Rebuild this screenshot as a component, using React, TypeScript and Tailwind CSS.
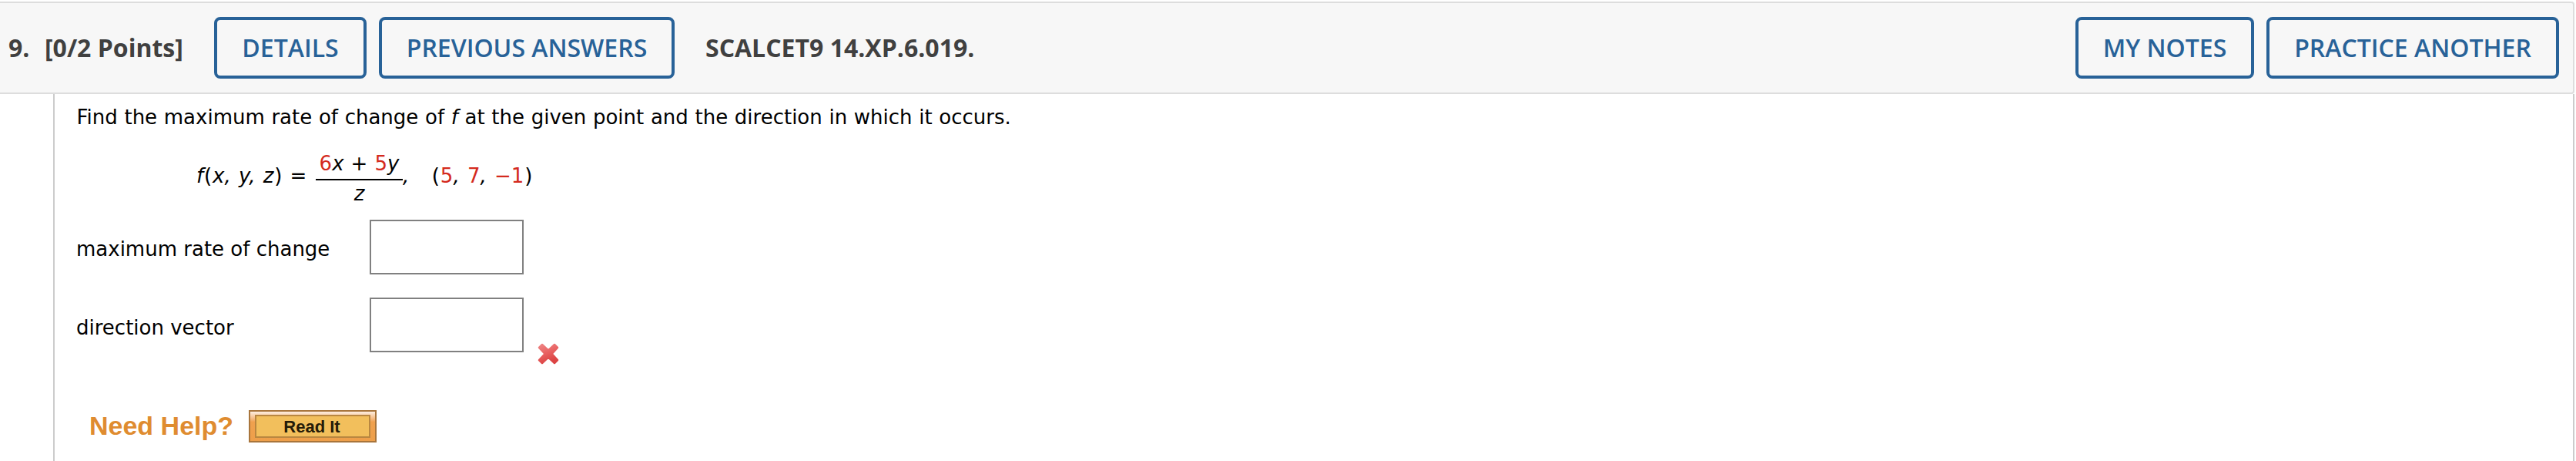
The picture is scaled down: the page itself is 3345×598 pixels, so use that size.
import type { ReactNode } from "react";

function HeaderButton({ children, width }: { children: ReactNode; width: string }) {
  return (
    <button
      className={`${width} flex h-[80px] shrink-0 items-center justify-center rounded-[8px] border-4 border-[#286298] font-semibold whitespace-nowrap text-[#286298]`}
    >
      {children}
    </button>
  );
}

function Header() {
  return (
    <header className="flex h-[120px] w-[3343px] items-center rounded-r-[4px] border-y-2 border-r-2 border-[#dddddd] bg-[#f7f7f7] font-['Open_Sans',sans-serif] text-[32px] leading-[44px] text-[#404040]">
      <div className="flex w-[278px] shrink-0 pl-[11px] font-bold whitespace-nowrap">
        <span className="w-[47px]">9.</span>
        <span>[0/2 Points]</span>
      </div>
      <HeaderButton width="w-[198px]">DETAILS</HeaderButton>
      <div className="w-4 shrink-0" />
      <HeaderButton width="w-[384px]">PREVIOUS ANSWERS</HeaderButton>
      <span className="ml-[40px] font-bold whitespace-nowrap">SCALCET9 14.XP.6.019.</span>
      <div className="mr-[18px] ml-auto flex gap-4">
        <HeaderButton width="w-[232px]">MY NOTES</HeaderButton>
        <HeaderButton width="w-[380px]">PRACTICE ANOTHER</HeaderButton>
      </div>
    </header>
  );
}

function Red({ children }: { children: ReactNode }) {
  return <span className="text-[#d42a1e]">{children}</span>;
}

function Paren({ children }: { children: ReactNode }) {
  return <span className="px-[0.85px]">{children}</span>;
}

function Comma() {
  return (
    <>
      <i className="pr-[1.2px]">,</i>{" "}
    </>
  );
}

function Equation() {
  return (
    <div className="mt-[22px] ml-[155px] flex h-[78px] whitespace-nowrap [word-spacing:0.8px]">
      <div className="w-[155px] pt-[22px]">
        <i>f</i>
        <Paren>(</Paren>
        <i>x</i>
        <Comma />
        <i>y</i>
        <Comma />
        <i>z</i>
        <Paren>)</Paren> =
      </div>
      <div className="flex w-[113px] flex-col items-center">
        <div className="h-[44px] w-full border-b-2 border-black pt-[6px] text-center">
          <Red>6</Red>
          <i>x</i> + <Red>5</Red>
          <i>y</i>
        </div>
        <div className="pt-px">
          <i>z</i>
        </div>
      </div>
      <div className="w-[37px] pt-[22px]">
        <i>,</i>
      </div>
      <div className="pt-[22px]">
        <Paren>(</Paren>
        <Red>5</Red>
        <Comma />
        <Red>7</Red>
        <Comma />
        <Red>−1</Red>
        <Paren>)</Paren>
      </div>
    </div>
  );
}

function WrongMark() {
  return (
    <svg className="mt-[59px] ml-[18px] h-[28px] w-[28px]" viewBox="0 0 28 28">
      <defs>
        <linearGradient id="mark" x1="0" y1="0" x2="0.4" y2="1">
          <stop offset="0" stopColor="#ee8585" />
          <stop offset="0.5" stopColor="#e96363" />
          <stop offset="1" stopColor="#dc4444" />
        </linearGradient>
      </defs>
      <path
        d="M6 2 L14 9.5 L22 2 L26 6 L18.700 14 L26 22 L22 26 L14 18.700 L6 26 L2 22 L9.500 14 L2 6 Z"
        fill="url(#mark)"
        stroke="url(#mark)"
        strokeWidth="2.500"
        strokeLinejoin="round"
      />
    </svg>
  );
}

function Answer({ label, wrong }: { label: string; wrong?: boolean }) {
  return (
    <div className="flex h-[101px] items-start">
      <label className={`${wrong ? "pt-[23px]" : "pt-[22px]"} w-[381px] whitespace-nowrap`}>{label}</label>
      <input className="h-[71px] w-[200px] border-2 border-[#808080] bg-white" aria-label={label} />
      {wrong && <WrongMark />}
    </div>
  );
}

function NeedHelp() {
  return (
    <div className="mt-[45px] ml-[17px] flex items-start font-['Liberation_Sans',Arial,sans-serif] font-bold">
      <span className="w-[207px] text-[34px] leading-[40px] whitespace-nowrap text-[#df8c30]">Need Help?</span>
      <button className="h-[42px] w-[166px] border-2 border-[#a8753c] bg-linear-to-b from-[#fdeee0] from-0% via-[#f0a14e] via-35% to-[#ed9f4a] px-[6px] py-1">
        <span className="flex h-full items-center justify-center border-2 border-[#b98740] bg-[#f2bf5c] pt-[2px] pr-[2px] text-[22px] leading-[22px] whitespace-nowrap text-[#251b08]">
          Read It
        </span>
      </button>
    </div>
  );
}

export default function App() {
  return (
    <div className="flex h-[598px] w-[3345px] flex-col overflow-hidden bg-white pt-[2px]">
      <Header />
      <main className="ml-[69px] w-[3274px] flex-1 border-x-2 border-[#cccccc] pl-[29px] font-['DejaVu_Sans',Verdana,sans-serif] text-[26px] leading-[32px] text-black">
        <p className="mt-[14px] -ml-[0.5px] whitespace-nowrap [word-spacing:0.4px]">
          Find the maximum rate of change of <i>f</i> at the given point and the direction in which it occurs.
        </p>
        <Equation />
        <div className="mt-[17px] -ml-px">
          <Answer label="maximum rate of change" />
          <Answer label="direction vector" wrong />
        </div>
        <div className="-ml-px">
          <NeedHelp />
        </div>
      </main>
    </div>
  );
}
